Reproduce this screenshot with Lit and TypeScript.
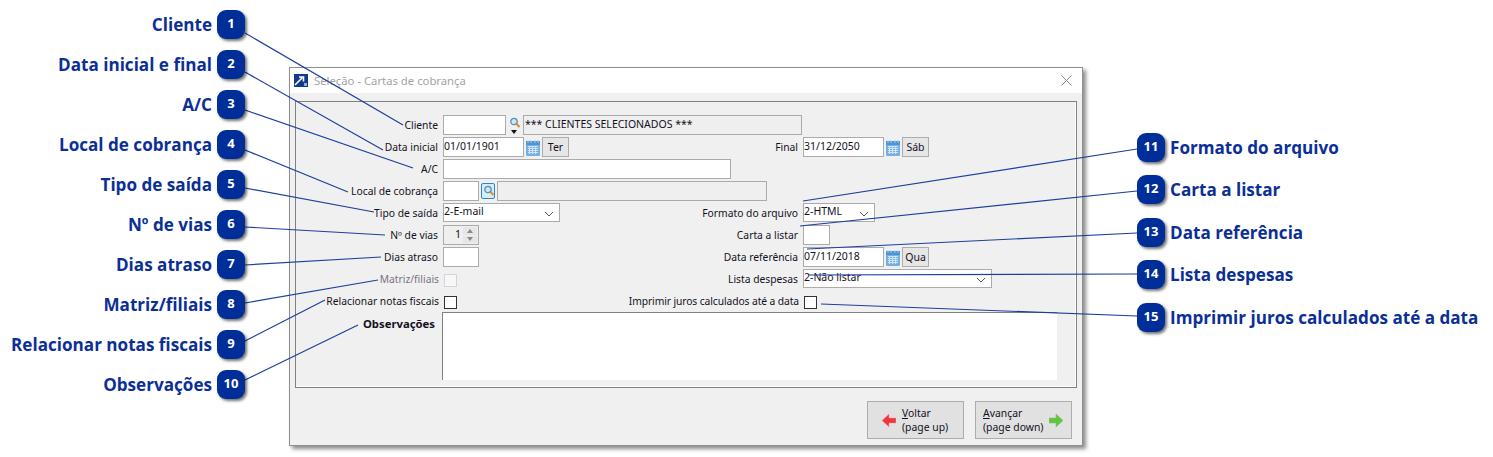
import { LitElement, html, css, svg } from "lit";
import { customElement } from "lit/decorators.js";

const CALLOUTS = [
  { n: 1, t: "Cliente", y: 10 }, { n: 2, t: "Data inicial e final", y: 50 }, { n: 3, t: "A/C", y: 90 },
  { n: 4, t: "Local de cobrança", y: 130 }, { n: 5, t: "Tipo de saída", y: 170 }, { n: 6, t: "Nº de vias", y: 210 },
  { n: 7, t: "Dias atraso", y: 250 }, { n: 8, t: "Matriz/filiais", y: 290 }, { n: 9, t: "Relacionar notas fiscais", y: 330 },
  { n: 10, t: "Observações", y: 370 },
  { n: 11, t: "Formato do arquivo", y: 133, r: 1 }, { n: 12, t: "Carta a listar", y: 175, r: 1 },
  { n: 13, t: "Data referência", y: 218, r: 1 }, { n: 14, t: "Lista despesas", y: 260, r: 1 },
  { n: 15, t: "Imprimir juros calculados até a data", y: 303, r: 1 },
];
const LINES = [
  [245, 33, 403, 125], [245, 72, 383, 150], [245, 110, 413, 168], [245, 150, 348, 192], [245, 188, 374, 212],
  [245, 227, 385, 235], [245, 265, 381, 257], [245, 303, 378, 280], [245, 341, 325, 300], [245, 380, 358, 325],
  [1137, 149, 803, 201], [1137, 191, 800, 226], [1137, 233, 807, 249], [1137, 274, 808, 275], [1137, 316, 821, 304],
];

const chevron = html`<svg class="chev" width="10" height="6" viewBox="0 0 10 6"><path d="M1 1l4 4 4-4" fill="none" stroke="#555" stroke-width="1"/></svg>`;
const calendar = html`<svg class="ico" width="14" height="16" viewBox="0 0 14 16"><rect x="0" y="1" width="14" height="15" rx="1" fill="#74b0e4"/><rect x="0" y="1" width="14" height="4" fill="#4d94d2"/><path d="M2 0v3M5 0v3M9 0v3M12 0v3" stroke="#a9cdea"/><path d="M2 6.500h10M2 8.500h10M2 10.500h10M2 12.500h10M3.500 6v8M6.500 6v8M9.500 6v8" stroke="#cfe3f5" stroke-width="1"/></svg>`;
const lens = svg`<circle cx="5" cy="4.500" r="3.200" fill="#cfe6f7" stroke="#5b8db5" stroke-width="1.300"/><path d="M7.500 7l3 3" stroke="#e08a2c" stroke-width="2"/>`;

@customElement("app-root")
export class AppRoot extends LitElement {
  static styles = css`
    :host { display: block; width: 1493px; height: 457px; position: relative; overflow: hidden; background: #fff; }
    .window { position: absolute; left: 289px; top: 67px; width: 794px; height: 379px; box-sizing: border-box;
      border: 1px solid #8f8f8f; background: #f0f0f0; box-shadow: 3px 3px 4px rgba(0,0,0,.45);
      display: flex; flex-direction: column; font: 10.500px/20px "Noto Sans", sans-serif; color: #14101e; }
    .title { height: 25px; background: #fff; display: flex; align-items: center; padding: 0 10px 0 4px; gap: 6px;
      font: 11.300px "Noto Sans", sans-serif; color: #a3a3a3; }
    .title span { flex: 1; }
    .group { margin: 8px 5px 0 5px; height: 287px; box-sizing: border-box; border: 1px solid #808080; box-shadow: inset -1px -1px 0 #fff; padding-top: 13px;
      display: grid; grid-template-columns: 142px 155px 195px 1fr; column-gap: 5px;
      grid-template-rows: repeat(8, 20px) 19px 68px; row-gap: 2px; }
    .lbl { text-align: right; white-space: nowrap; line-height: 20px; font-size: 10.300px; }
    .lbl.out { margin-right: -1px; }
    .lbl.dis { color: #7c7284; }
    .lbl.tight { letter-spacing: -.1px; }
    .lbl.bold { font-weight: 700; font-size: 11.300px; margin-right: 3px; }
    .lbl.top { line-height: 24px; }
    .cell { display: flex; gap: 2px; align-items: flex-start; }
    .wide { grid-column: 2 / 5; }
    .f { box-sizing: border-box; height: 20px; border: 1px solid #ababab; background: #fff; line-height: 17px; white-space: nowrap; position: relative; }
    .ro { background: #efefef; padding-left: 1px; }
    .sel { height: 19px; line-height: 15px; }
    .chev { position: absolute; right: 5px; top: 7px; }
    .w36 { width: 36px; } .w63 { width: 63px; } .w81 { width: 81px; } .w27 { width: 27px; }
    .w117 { width: 117px; } .w72 { width: 72px; } .w189 { width: 189px; } .w288 { width: 288px; }
    .w279 { width: 279px; margin-left: 3px; } .w270 { width: 270px; }
    .btn { box-sizing: border-box; height: 20px; border: 1px solid #adadad; background: #e6e6e6; width: 27px; text-align: center; line-height: 18px; }
    .ico { flex: none; margin-top: 3px; }
    .pick { flex: none; width: 14px; height: 16px; margin-top: 2px; box-sizing: border-box; border: 1px solid #2e86d0; border-radius: 2px; background: #d9ecfa; }
    .pick svg { display: block; margin: 1px; }
    .srch { flex: none; width: 12px; margin-left: 2px; height: 20px; display: flex; flex-direction: column; align-items: center; justify-content: space-between; padding: 2px 0 1px; box-sizing: border-box; }
    .tri { width: 0; height: 0; border: 3.500px solid transparent; border-top: 4px solid #111; border-bottom: 0; }
    .spin { background: #efefef; text-align: right; padding-right: 17px; }
    .arrows { position: absolute; right: 1px; top: 1px; width: 14px; height: 16px; display: flex; flex-direction: column; gap: 1px; }
    .arrows i { flex: 1; background: #e6e6e6; display: flex; align-items: center; justify-content: center; }
    .up { width: 0; height: 0; border: 3.500px solid transparent; border-bottom: 4px solid #888; border-top: 0; }
    .dn { width: 0; height: 0; border: 3.500px solid transparent; border-top: 4px solid #888; border-bottom: 0; }
    .chk { box-sizing: border-box; width: 13px; height: 13px; border: 1px solid #333; background: #fff; margin-left: 1px; }
    .chk.dis { border-color: #d4d4d4; background: #f7f7f7; margin-top: 5px; }
    .chk.low { margin-top: 5px; }
    .memo { grid-column: 2 / 5; margin-left: -1px; width: 615px; height: 68px; background: #fff; border-left: 1px solid #808080; border-top: 1px solid #808080; box-sizing: border-box; }
    .foot { flex: 1; display: flex; justify-content: flex-end; align-items: flex-start; gap: 11px; padding: 13px 10px 0 0; }
    .big { box-sizing: border-box; width: 97px; height: 38px; background: #e1e1e1; border: 1px solid #adadad; display: flex; align-items: center; gap: 6px;
      font: 10.400px/14px "Noto Sans", sans-serif; white-space: nowrap; }
    .big.l { padding-left: 14px; } .big.r { padding-left: 7px; }
    .big u { text-decoration: underline; }
    .lines { position: absolute; inset: 0; pointer-events: none; }
    .co { position: absolute; display: flex; align-items: center; font: 700 17.100px/29px "Open Sans", sans-serif; color: #0b2f97; white-space: nowrap; }
    .co.l { left: 0; width: 245px; justify-content: flex-end; gap: 5px; }
    .co.r { left: 1137px; gap: 5px; }
    .badge { flex: none; width: 28px; height: 29px; border-radius: 9px; background: #002e99; color: #fff; text-align: center;
      font: 700 13px/27px "Open Sans", sans-serif; box-shadow: 2px 2px 3px rgba(0,0,0,.55); }
  `;

  render() {
    return html`
      <div class="window">
        <div class="title">
          <svg width="14" height="13" viewBox="0 0 14 13"><rect width="14" height="13" fill="#12398f"/><path d="M1 11l7-7M5 3h4.500v4.500" fill="none" stroke="#fff" stroke-width="1.600"/><path d="M10 12V9h3v3z" fill="#8fb3e0"/></svg>
          <span>Seleção - Cartas de cobrança</span>
          <svg width="11" height="11" viewBox="0 0 11 11"><path d="M.5.5l10 10M10.500.5l-10 10" stroke="#8a8a8a"/></svg>
        </div>
        <div class="group">
          <div class="lbl">Cliente</div>
          <div class="cell wide" style="gap:0"><div class="f w63"></div>
            <div class="srch"><svg width="11" height="11" viewBox="0 0 11 11">${lens}</svg><div class="tri"></div></div>
            <div class="f ro w279">*** CLIENTES SELECIONADOS ***</div></div>

          <div class="lbl">Data inicial</div>
          <div class="cell"><div class="f w81">01/01/1901</div>${calendar}<div class="btn">Ter</div></div>
          <div class="lbl">Final</div>
          <div class="cell"><div class="f w81">31/12/2050</div>${calendar}<div class="btn">Sáb</div></div>

          <div class="lbl">A/C</div>
          <div class="cell wide"><div class="f w288"></div></div>

          <div class="lbl">Local de cobrança</div>
          <div class="cell wide"><div class="f w36"></div><div class="pick"><svg width="12" height="12" viewBox="0 0 12 12">${lens}</svg></div><div class="f ro w270"></div></div>

          <div class="lbl">Tipo de saída</div>
          <div class="cell"><div class="f sel w117">2-E-mail${chevron}</div></div>
          <div class="lbl">Formato do arquivo</div>
          <div class="cell"><div class="f sel w72">2-HTML${chevron}</div></div>

          <div class="lbl">Nº de vias</div>
          <div class="cell"><div class="f spin w36">1<div class="arrows"><i><b class="up"></b></i><i><b class="dn"></b></i></div></div></div>
          <div class="lbl">Carta a listar</div>
          <div class="cell"><div class="f w27"></div></div>

          <div class="lbl">Dias atraso</div>
          <div class="cell"><div class="f w36"></div></div>
          <div class="lbl">Data referência</div>
          <div class="cell"><div class="f w81">07/11/2018</div>${calendar}<div class="btn">Qua</div></div>

          <div class="lbl out dis">Matriz/filiais</div>
          <div class="cell"><div class="chk dis"></div></div>
          <div class="lbl">Lista despesas</div>
          <div class="cell"><div class="f sel w189">2-Não listar${chevron}</div></div>

          <div class="lbl out">Relacionar notas fiscais</div>
          <div class="cell"><div class="chk low"></div></div>
          <div class="lbl out tight">Imprimir juros calculados até a data</div>
          <div class="cell"><div class="chk low"></div></div>

          <div class="lbl bold top">Observações</div>
          <div class="memo"></div>
        </div>
        <div class="foot">
          <div class="big l">
            <svg width="14" height="13" viewBox="0 0 14 13"><path d="M7 0L0 6.500 7 13V9h7V4H7z" fill="#f2343c" stroke="#e8a0a0" stroke-width=".5"/></svg>
            <div><u>V</u>oltar<br />(page up)</div>
          </div>
          <div class="big r">
            <div><u>A</u>vançar<br />(page down)</div>
            <svg width="14" height="13" viewBox="0 0 14 13"><path d="M7 0l7 6.500L7 13V9H0V4h7z" fill="#62c63c" stroke="#8fb57f" stroke-width=".5"/></svg>
          </div>
        </div>
      </div>
      <svg class="lines" width="1493" height="457">
        ${LINES.map(([a, b, c, d]) => svg`<line x1=${a} y1=${b} x2=${c} y2=${d} stroke="#1c3f9e" stroke-width="1.200"/>`)}
      </svg>
      ${CALLOUTS.map((c) => c.r
        ? html`<div class="co r" style="top:${c.y}px"><div class="badge">${c.n}</div><span>${c.t}</span></div>`
        : html`<div class="co l" style="top:${c.y}px"><span>${c.t}</span><div class="badge">${c.n}</div></div>`)}
    `;
  }
}
